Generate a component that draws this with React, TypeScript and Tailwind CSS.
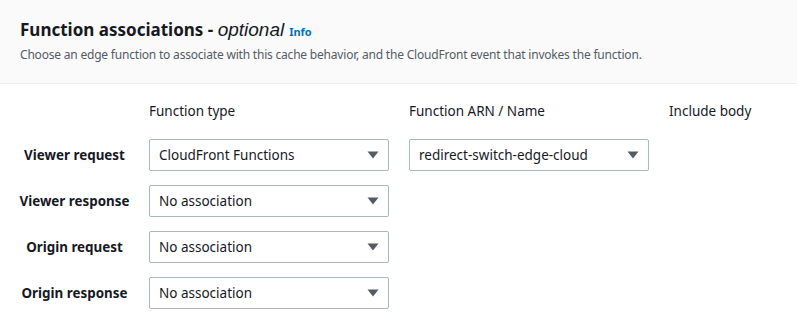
import React from 'react';

const rows = [
	{ label: 'Viewer request', type: 'CloudFront Functions', arn: 'redirect-switch-edge-cloud' },
	{ label: 'Viewer response', type: 'No association' },
	{ label: 'Origin request', type: 'No association' },
	{ label: 'Origin response', type: 'No association' },
];

const Caret: React.FC = () => (
	<svg width="12" height="8" viewBox="0 0 12 8" className="shrink-0">
		<path d="M0.5 0.5 L11.5 0.5 L6 7.5 Z" fill="#545b64" />
	</svg>
);

const Select: React.FC<{ value: string }> = ({ value }) => (
	<div className="flex h-[32px] w-[240px] items-center justify-between rounded-[2px] border border-[#aab7b8] bg-white pl-[9px] pr-[9px] text-[13.5px] text-[#16191f]">
		<span>{ value }</span>
		<Caret />
	</div>
);

export default function App() {
	return (
		<div className="min-h-[327px] w-[797px] bg-white font-['Noto_Sans',sans-serif]">
			<div className="border-b border-[#eaeded] bg-[#fafafa] px-[20px] pt-[17px] pb-[18px]">
				<div className="flex items-baseline gap-[5px]">
					<h2 className="text-[17px] font-bold leading-[26px] text-[#16191f]">
						Function associations - <i className="font-['Liberation_Sans',sans-serif] text-[19px] font-normal">optional</i>
					</h2>
					<a className="text-[11px] font-bold text-[#0073bb]">Info</a>
				</div>
				<p className="mt-[2px] text-[12px] leading-[20px] tracking-[-0.2px] text-[#545b64]">
					Choose an edge function to associate with this cache behavior, and the CloudFront event that invokes the function.
				</p>
			</div>
			<div className="grid grid-cols-[129px_240px_240px_auto] gap-x-[20px] gap-y-[14px] pt-[17px] pr-[20px]">
				<div />
				<div className="pb-[4px] text-[13.5px] leading-[20px] text-[#16191f]">Function type</div>
				<div className="pb-[4px] text-[13.5px] leading-[20px] text-[#16191f]">Function ARN / Name</div>
				<div className="pb-[4px] text-[13.5px] leading-[20px] text-[#16191f]">Include body</div>
				{ rows.map((r) => (
					<React.Fragment key={ r.label }>
						<div className="-mr-[20px] flex items-center justify-center text-[13.4px] font-bold text-[#16191f]">
							{ r.label }
						</div>
						<Select value={ r.type } />
						{ r.arn ? <Select value={ r.arn } /> : <div /> }
						<div />
					</React.Fragment>
				)) }
			</div>
		</div>
	);
}
